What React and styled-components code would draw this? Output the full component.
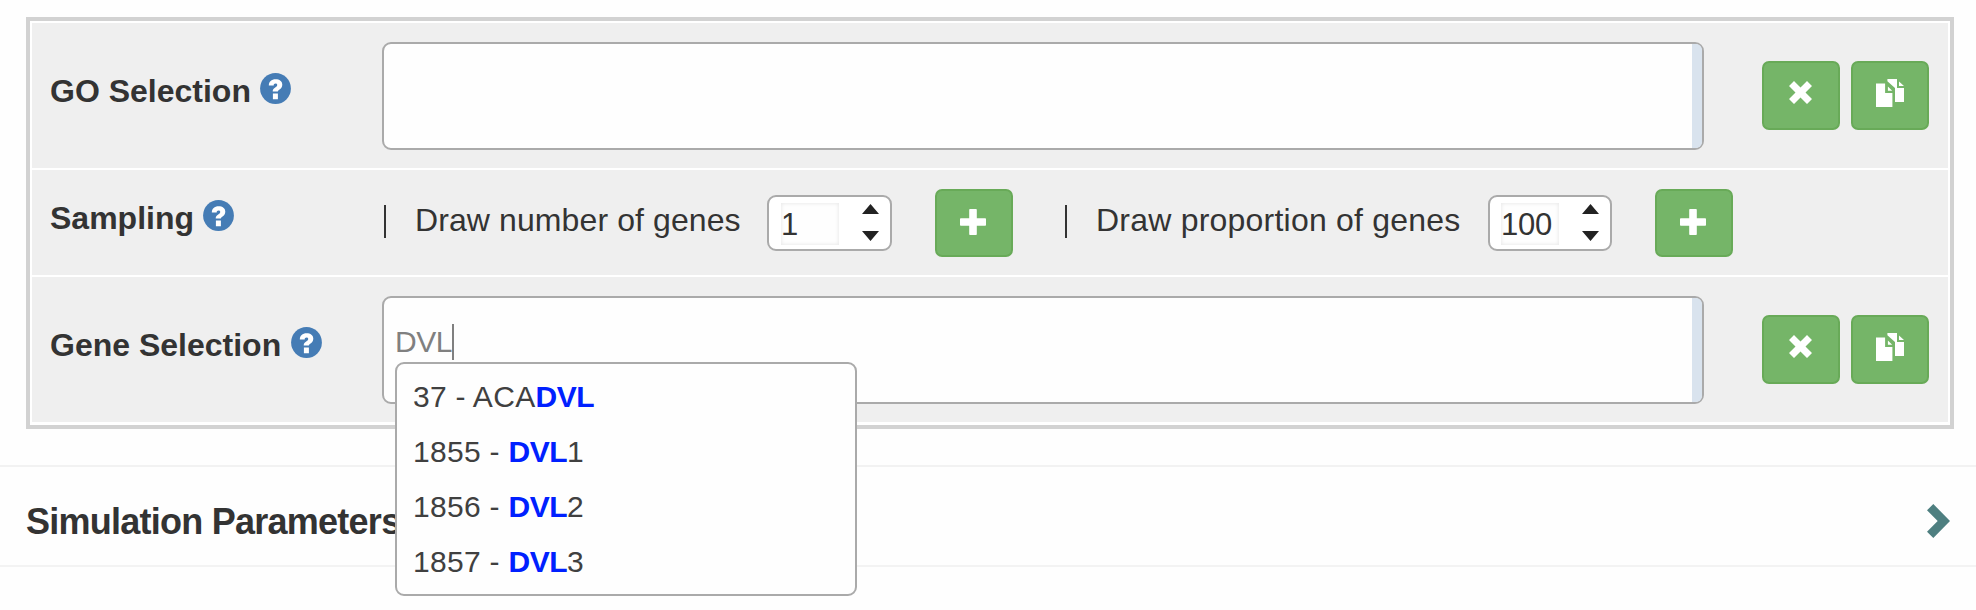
import React from "react";
import styled, { createGlobalStyle } from "styled-components";

const GlobalStyle = createGlobalStyle`
  * { box-sizing: border-box; }
  body {
    margin: 0;
    background: #fefefe;
    color: #333;
    font-family: "Liberation Sans", Arial, sans-serif;
    font-size: 32px;
    overflow: hidden;
  }
`;

const Page = styled.main`
  height: 610px;
  padding-top: 17px;
  overflow: hidden;
`;

const Panel = styled.section`
  display: flex;
  flex-direction: column;
  gap: 2px;
  width: 1928px;
  height: 412px;
  margin-left: 26px;
  padding: 2px;
  border: 4px solid #d2d2d2;
  background: #fff;
`;

const Row = styled.div`
  display: flex;
  align-items: flex-start;
  height: ${(p) => p.$height}px;
  padding-left: 18px;
  background: #efefef;
`;

const Label = styled.div`
  display: flex;
  align-items: flex-start;
  gap: ${(p) => p.$gap || 9}px;
  flex: none;
  width: 332px;
  margin-top: ${(p) => p.$top}px;
  font-weight: bold;
  line-height: 40px;
  white-space: nowrap;

  svg { margin-top: 2px; flex: none; }
`;

const TokenBox = styled.div`
  position: relative;
  display: flex;
  justify-content: space-between;
  flex: none;
  width: 1322px;
  height: 108px;
  margin-top: 19px;
  border: 2px solid #aaa;
  border-radius: 9px;
  background: #fefefe;
`;

const ScrollTrack = styled.div`
  width: 10px;
  height: 104px;
  border-radius: 0 6px 6px 0;
  background: #d9e3ee;
`;

const TokenInput = styled.div`
  display: flex;
  align-items: flex-start;
  margin: 26px 0 0 11px;
  color: #808080;
  font-size: 30px;
  line-height: 36px;
  letter-spacing: -0.4px;
`;

const Caret = styled.span`
  width: 2px;
  height: 36px;
  background: #808080;
`;

const Actions = styled.div`
  display: flex;
  gap: 11px;
  margin: 38px 0 0 58px;
`;

const Button = styled.button`
  display: flex;
  align-items: flex-start;
  justify-content: center;
  flex: none;
  width: 78px;
  height: ${(p) => p.$height || 69}px;
  margin: 0;
  padding: ${(p) => p.$iconTop}px ${(p) => p.$iconRight || 0}px 0 0;
  border: 2px solid #68aa58;
  border-radius: 7px;
  background: #75b568;
`;

const SamplingGroup = styled.div`
  display: flex;
  align-items: flex-start;
  flex: none;
  width: ${(p) => p.$width}px;
  padding-top: 19px;
`;

const Separator = styled.span`
  width: 2px;
  height: 33px;
  margin: 16px 29px 0 2px;
  background: #333;
`;

const SamplingText = styled.span`
  flex: none;
  width: ${(p) => p.$width}px;
  margin-top: 11px;
  line-height: 40px;
  white-space: nowrap;
  letter-spacing: ${(p) => p.$tracking}px;
`;

const Spinner = styled.div`
  display: flex;
  flex: none;
  width: ${(p) => p.$width}px;
  height: 56px;
  margin: 6px 43px 0 0;
  padding: 6px 0 0 ${(p) => p.$inset}px;
  border: 2px solid #aaa;
  border-radius: 9px;
  background: #fff;
`;

const SpinnerValue = styled.div`
  width: 58px;
  height: 42px;
  background: #fefefe;
  box-shadow: inset 0 0 4px #e4e4e4;
  font-size: 31px;
  line-height: 43px;
  letter-spacing: -0.3px;
`;

const Arrows = styled.svg`
  width: 17px;
  height: 37px;
  margin: 1px 0 0 23px;
`;

const Menu = styled.ul`
  position: absolute;
  z-index: 2;
  top: 64px;
  left: 11px;
  width: 462px;
  height: 234px;
  margin: 0;
  padding: 5px 0 0 16px;
  border: 2px solid #aaa;
  border-radius: 9px;
  background: #fefefe;
  color: #404040;
  font-size: 30px;
  letter-spacing: 0.3px;
  list-style: none;
`;

const MenuItem = styled.li`
  height: 55px;
  line-height: 55px;
  white-space: nowrap;
`;

const Match = styled.b`
  color: #0020ff;
  letter-spacing: -0.5px;
`;

const SectionHeader = styled.header`
  display: flex;
  align-items: flex-start;
  justify-content: space-between;
  height: 102px;
  margin-top: 36px;
  padding: 35px 26px 0 26px;
  border-top: 2px solid #f2f2f2;
  border-bottom: 2px solid #f3f3f3;

  svg { margin-top: 2px; }
`;

const SectionTitle = styled.h2`
  margin: 0;
  font-size: 36px;
  font-weight: bold;
  line-height: 40px;
  letter-spacing: -0.75px;
`;

function HelpIcon() {
  return (
    <svg width="31" height="31" viewBox="0 0 31 31">
      <circle cx="15.5" cy="15.5" r="15.4" fill="#457cb5" />
      <path
        fill="#fff"
        d="M8.8 12.4C9 8.6 11.4 6.3 15.6 6.3C19.5 6.3 22.3 8.2 22.3 11.7C22.3 14.5 20.6 15.6 19.2 16.7C18.2 17.4 17.9 17.8 17.9 18.6H12.7C12.7 16.6 13.5 15.7 14.9 14.8C16.4 13.8 17.2 13.1 17.2 12C17.2 11 16.6 10.5 15.6 10.5C14.3 10.5 13.7 11.2 13.7 12.4ZM12.9 20.5H17.9V26.2H12.9Z"
      />
    </svg>
  );
}

function RemoveIcon() {
  return (
    <svg width="23" height="23" viewBox="0 0 23 23">
      <path fill="#fff" d="M5 0L11.5 6.4L18 0L23 5L16.5 11.5L23 18L18 23L11.5 16.6L5 23L0 18L6.5 11.5L0 5Z" />
    </svg>
  );
}

function CopyIcon() {
  return (
    <svg width="28" height="28" viewBox="0 0 28 28">
      <path
        fill="#fff"
        d="M0 4.5H9.1V14H16.4V28H0ZM11.9 7.5L16.2 11.8H11.9ZM11.4 0H21V9H28V23H19V9L11.4 2.2ZM23 2.4L28 7.1H23Z"
      />
    </svg>
  );
}

function PlusIcon() {
  return (
    <svg width="26" height="26" viewBox="0 0 26 26">
      <path
        fill="#fff"
        d="M10 0H16Q16.8 0 16.8 .8V9.3H25.2Q26 9.3 26 10V16Q26 16.8 25.2 16.8H16.8V25.2Q16.8 26 16 26H10Q9.2 26 9.2 25.2V16.8H.8Q0 16.8 0 16V10Q0 9.3 .8 9.3H9.2V.8Q9.2 0 10 0Z"
      />
    </svg>
  );
}

function ChevronIcon() {
  return (
    <svg width="23" height="34" viewBox="0 0 23 34">
      <path fill="#4e7f80" d="M6.3 0L23 17L6.3 34L0 27.7L10.7 17L0 6.3Z" />
    </svg>
  );
}

function RowActions() {
  return (
    <Actions>
      <Button $iconTop={18} $iconRight={1} aria-label="Clear"><RemoveIcon /></Button>
      <Button $iconTop={16} aria-label="Copy"><CopyIcon /></Button>
    </Actions>
  );
}

function Sampling({ text, value, width, textWidth, tracking, spinnerWidth, inset }) {
  return (
    <SamplingGroup $width={width}>
      <Separator />
      <SamplingText $width={textWidth} $tracking={tracking}>{text}</SamplingText>
      <Spinner $width={spinnerWidth} $inset={inset}>
        <SpinnerValue>{value}</SpinnerValue>
        <Arrows viewBox="0 0 17 37">
          <path fill="#222" d="M8.5 0L17 10H0ZM0 27H17L8.5 37Z" />
        </Arrows>
      </Spinner>
      <Button $height={68} $iconTop={18} $iconRight={2} aria-label="Add"><PlusIcon /></Button>
    </SamplingGroup>
  );
}

const suggestions = [
  { before: "37 - ACA", after: "" },
  { before: "1855 - ", after: "1" },
  { before: "1856 - ", after: "2" },
  { before: "1857 - ", after: "3" },
];

export default function App() {
  return (
    <>
      <GlobalStyle />
      <Page>
        <Panel>
          <Row $height={145}>
            <Label $top={48}>GO Selection<HelpIcon /></Label>
            <TokenBox>
              <span />
              <ScrollTrack />
            </TokenBox>
            <RowActions />
          </Row>
          <Row $height={105}>
            <Label $top={28}>Sampling<HelpIcon /></Label>
            <Sampling text="Draw number of genes" value="1" width={681} textWidth={352} tracking={0.1} spinnerWidth={125} inset={12} />
            <Sampling text="Draw proportion of genes" value="100" width={680} textWidth={392} tracking={0.22} spinnerWidth={124} inset={11} />
          </Row>
          <Row $height={145}>
            <Label $top={48} $gap={10}>Gene Selection<HelpIcon /></Label>
            <TokenBox>
              <TokenInput>DVL<Caret /></TokenInput>
              <ScrollTrack />
              <Menu>
                {suggestions.map((s) => (
                  <MenuItem key={s.before}>
                    {s.before}<Match>DVL</Match>{s.after}
                  </MenuItem>
                ))}
              </Menu>
            </TokenBox>
            <RowActions />
          </Row>
        </Panel>
        <SectionHeader>
          <SectionTitle>Simulation Parameters</SectionTitle>
          <ChevronIcon />
        </SectionHeader>
      </Page>
    </>
  );
}
